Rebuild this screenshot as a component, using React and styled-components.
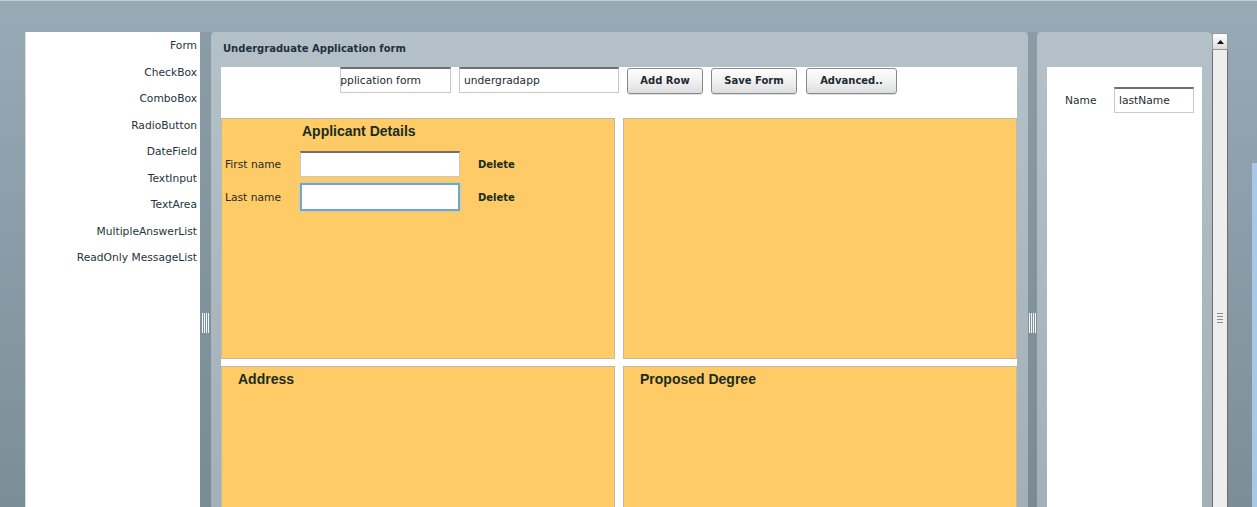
import React from "react"
import styled, { createGlobalStyle } from "styled-components"

const GlobalStyle = createGlobalStyle`
  html, body { margin: 0; padding: 0; overflow: hidden; }
  body { font-family: "DejaVu Sans", Verdana, sans-serif; }
`

const paletteItems = [
  "Form",
  "CheckBox",
  "ComboBox",
  "RadioButton",
  "DateField",
  "TextInput",
  "TextArea",
  "MultipleAnswerList",
  "ReadOnly MessageList",
]

function Grip({ horizontal }) {
  return (
    <GripBox $horizontal={horizontal}>
      {[0, 1, 2, 3].map((i) => <GripLine key={i} $horizontal={horizontal} />)}
    </GripBox>
  )
}

export default function App() {
  return (
    <Screen>
      <GlobalStyle />
      <Palette>
        {paletteItems.map((item) => (
          <PaletteItem key={item}>{item}</PaletteItem>
        ))}
      </Palette>
      <Splitter $width={11}>
        <Grip />
      </Splitter>
      <FormPanel>
        <PanelTitle>Undergraduate Application form</PanelTitle>
        <Canvas>
          <Toolbar>
            <Field $width={111}>
              <Scrolled $shift={-12}>Application form</Scrolled>
            </Field>
            <Field $width={160}>undergradapp</Field>
            <Button $width={76}>Add Row</Button>
            <Button $width={86}>Save Form</Button>
            <Button $width={91} $gap={1}>Advanced..</Button>
          </Toolbar>
          <Sections>
            <Section>
              <SectionTitle $indent={80}>Applicant Details</SectionTitle>
              <FieldRow>
                <Label>First name</Label>
                <Field $width={160}></Field>
                <DeleteLink>Delete</DeleteLink>
              </FieldRow>
              <FieldRow>
                <Label>Last name</Label>
                <Field $width={160} $focused></Field>
                <DeleteLink>Delete</DeleteLink>
              </FieldRow>
            </Section>
            <Section />
            <Section>
              <SectionTitle $indent={16}>Address</SectionTitle>
            </Section>
            <Section>
              <SectionTitle $indent={16}>Proposed Degree</SectionTitle>
            </Section>
          </Sections>
        </Canvas>
      </FormPanel>
      <Splitter $width={9}>
        <Grip />
      </Splitter>
      <PropsPanel>
        <PanelTitle />
        <PropsBody>
          <PropRow>
            <PropLabel>Name</PropLabel>
            <Field $width={80}>lastName</Field>
          </PropRow>
        </PropsBody>
      </PropsPanel>
      <ScrollBar>
        <ArrowButton>
          <svg width="7" height="4" viewBox="0 0 7 4">
            <path d="M0 4 L3.5 0 L7 4 Z" fill="#111" />
          </svg>
        </ArrowButton>
        <Track>
          <Grip horizontal />
        </Track>
      </ScrollBar>
      <EdgeStrip />
    </Screen>
  )
}

const Screen = styled.div`
width: 1257px;
height: 507px;
box-sizing: border-box;
display: flex;
padding: 31px 0 0 25px;
background: linear-gradient(#97aab5, #7b8e98);
border-top: 1px solid #c3ced4;
overflow: hidden;
`
const Palette = styled.div`
width: 175px;
flex-shrink: 0;
background: #fff;
border-left: 1px solid #d7dde0;
box-sizing: border-box;
padding: 1px 3px 0 0;
`
const PaletteItem = styled.div`
height: 26.5px;
line-height: 26.5px;
text-align: right;
font-size: 10.7px;
color: #26343c;
white-space: nowrap;
`
const Splitter = styled.div`
width: ${(p) => p.$width}px;
flex-shrink: 0;
display: flex;
justify-content: center;
padding-top: 281px;
box-sizing: border-box;
background: linear-gradient(#8a9ca6, #798c96);
`
const GripBox = styled.div`
display: flex;
flex-direction: ${(p) => (p.$horizontal ? "column" : "row")};
gap: ${(p) => (p.$horizontal ? "2px" : "1px")};
height: fit-content;
`
const GripLine = styled.div`
${(p) => (p.$horizontal ? "width: 6px; height: 1px;" : "width: 1px; height: 20px;")}
background: ${(p) => (p.$horizontal ? "#8c8c8c" : "#f4f6f7")};
`
const FormPanel = styled.div`
width: 817px;
flex-shrink: 0;
box-sizing: border-box;
padding: 0 11px 0 10px;
border-radius: 5px 5px 0 0;
background: linear-gradient(#b4c1c8, #a3b0b8);
display: flex;
flex-direction: column;
`
const PanelTitle = styled.div`
height: 35px;
flex-shrink: 0;
padding-left: 2px;
line-height: 34px;
font-size: 10px;
font-weight: bold;
color: #1d3140;
white-space: nowrap;
`
const Canvas = styled.div`
flex: 1;
background: #fff;
`
const Toolbar = styled.div`
height: 51px;
display: flex;
align-items: flex-start;
gap: 8px;
padding-left: 119px;
`
const Field = styled.div`
width: ${(p) => p.$width}px;
height: 26px;
box-sizing: border-box;
flex-shrink: 0;
background: #fff;
border: 1px solid #c9c9c9;
border-top: 2px solid #6f6f6f;
padding: 0 4px;
line-height: 23px;
font-size: 10.7px;
color: #1e2a30;
white-space: nowrap;
overflow: hidden;
${(p) =>
  p.$focused &&
  `
  border: 2px solid #7ea6b2;
  box-shadow: 0 0 0 1px #b7d0d8;
  height: 28px;
`}
`
const Scrolled = styled.span`
display: inline-block;
margin-left: ${(p) => p.$shift}px;
`
const Button = styled.div`
width: ${(p) => p.$width}px;
margin-left: ${(p) => p.$gap || 0}px;
height: 26px;
margin-top: 1px;
box-sizing: border-box;
flex-shrink: 0;
border: 1px solid #868a8c;
border-radius: 3px;
background: linear-gradient(#fdfdfd, #f1f1f1 50%, #dedede);
box-shadow: 0 1px 0 rgba(0, 0, 0, 0.12);
text-align: center;
line-height: 23px;
font-size: 10px;
font-weight: bold;
color: #1c2a32;
`
const Sections = styled.div`
display: grid;
grid-template-columns: 394px 394px;
grid-template-rows: 241px 241px;
column-gap: 8px;
row-gap: 7px;
`
const Section = styled.div`
background: #fecb66;
border: 1px solid #c3baa6;
box-sizing: border-box;
`
const SectionTitle = styled.div`
padding: 4px 0 0 ${(p) => p.$indent}px;
height: 28px;
line-height: 17px;
font-family: "Liberation Sans", Arial, sans-serif;
font-size: 14px;
font-weight: bold;
color: #1b2c1f;
`
const FieldRow = styled.div`
display: flex;
align-items: center;
height: 26px;
margin-bottom: 7px;
padding-left: 3px;
`
const Label = styled.div`
width: 75px;
font-size: 10.7px;
color: #1e2a2a;
`
const DeleteLink = styled.div`
margin-left: 18px;
font-size: 10px;
font-weight: bold;
color: #1b2c1f;
`
const PropsPanel = styled.div`
width: 175px;
flex-shrink: 0;
box-sizing: border-box;
padding: 0 10px;
border-radius: 5px 5px 0 0;
background: linear-gradient(#b4c1c8, #a3b0b8);
display: flex;
flex-direction: column;
`
const PropsBody = styled.div`
flex: 1;
background: #fff;
padding: 20px 0 0 18px;
`
const PropRow = styled.div`
display: flex;
align-items: center;
`
const PropLabel = styled.div`
width: 49px;
font-size: 10.7px;
color: #24323a;
`
const ScrollBar = styled.div`
width: 16px;
flex-shrink: 0;
margin-top: 1px;
display: flex;
flex-direction: column;
`
const ArrowButton = styled.div`
height: 17px;
box-sizing: border-box;
border: 1px solid #9a9a9a;
border-radius: 2px;
background: linear-gradient(#ffffff, #dcdcdc);
display: flex;
align-items: center;
justify-content: center;
`
const Track = styled.div`
flex: 1;
background: #eeeeee;
border-left: 1px solid #6e6e6e;
border-right: 1px solid #6e6e6e;
display: flex;
justify-content: center;
padding-top: 263px;
`
const EdgeStrip = styled.div`
width: 5px;
flex-shrink: 0;
margin-left: auto;
margin-top: 131px;
background: #a9c8e8;
`
